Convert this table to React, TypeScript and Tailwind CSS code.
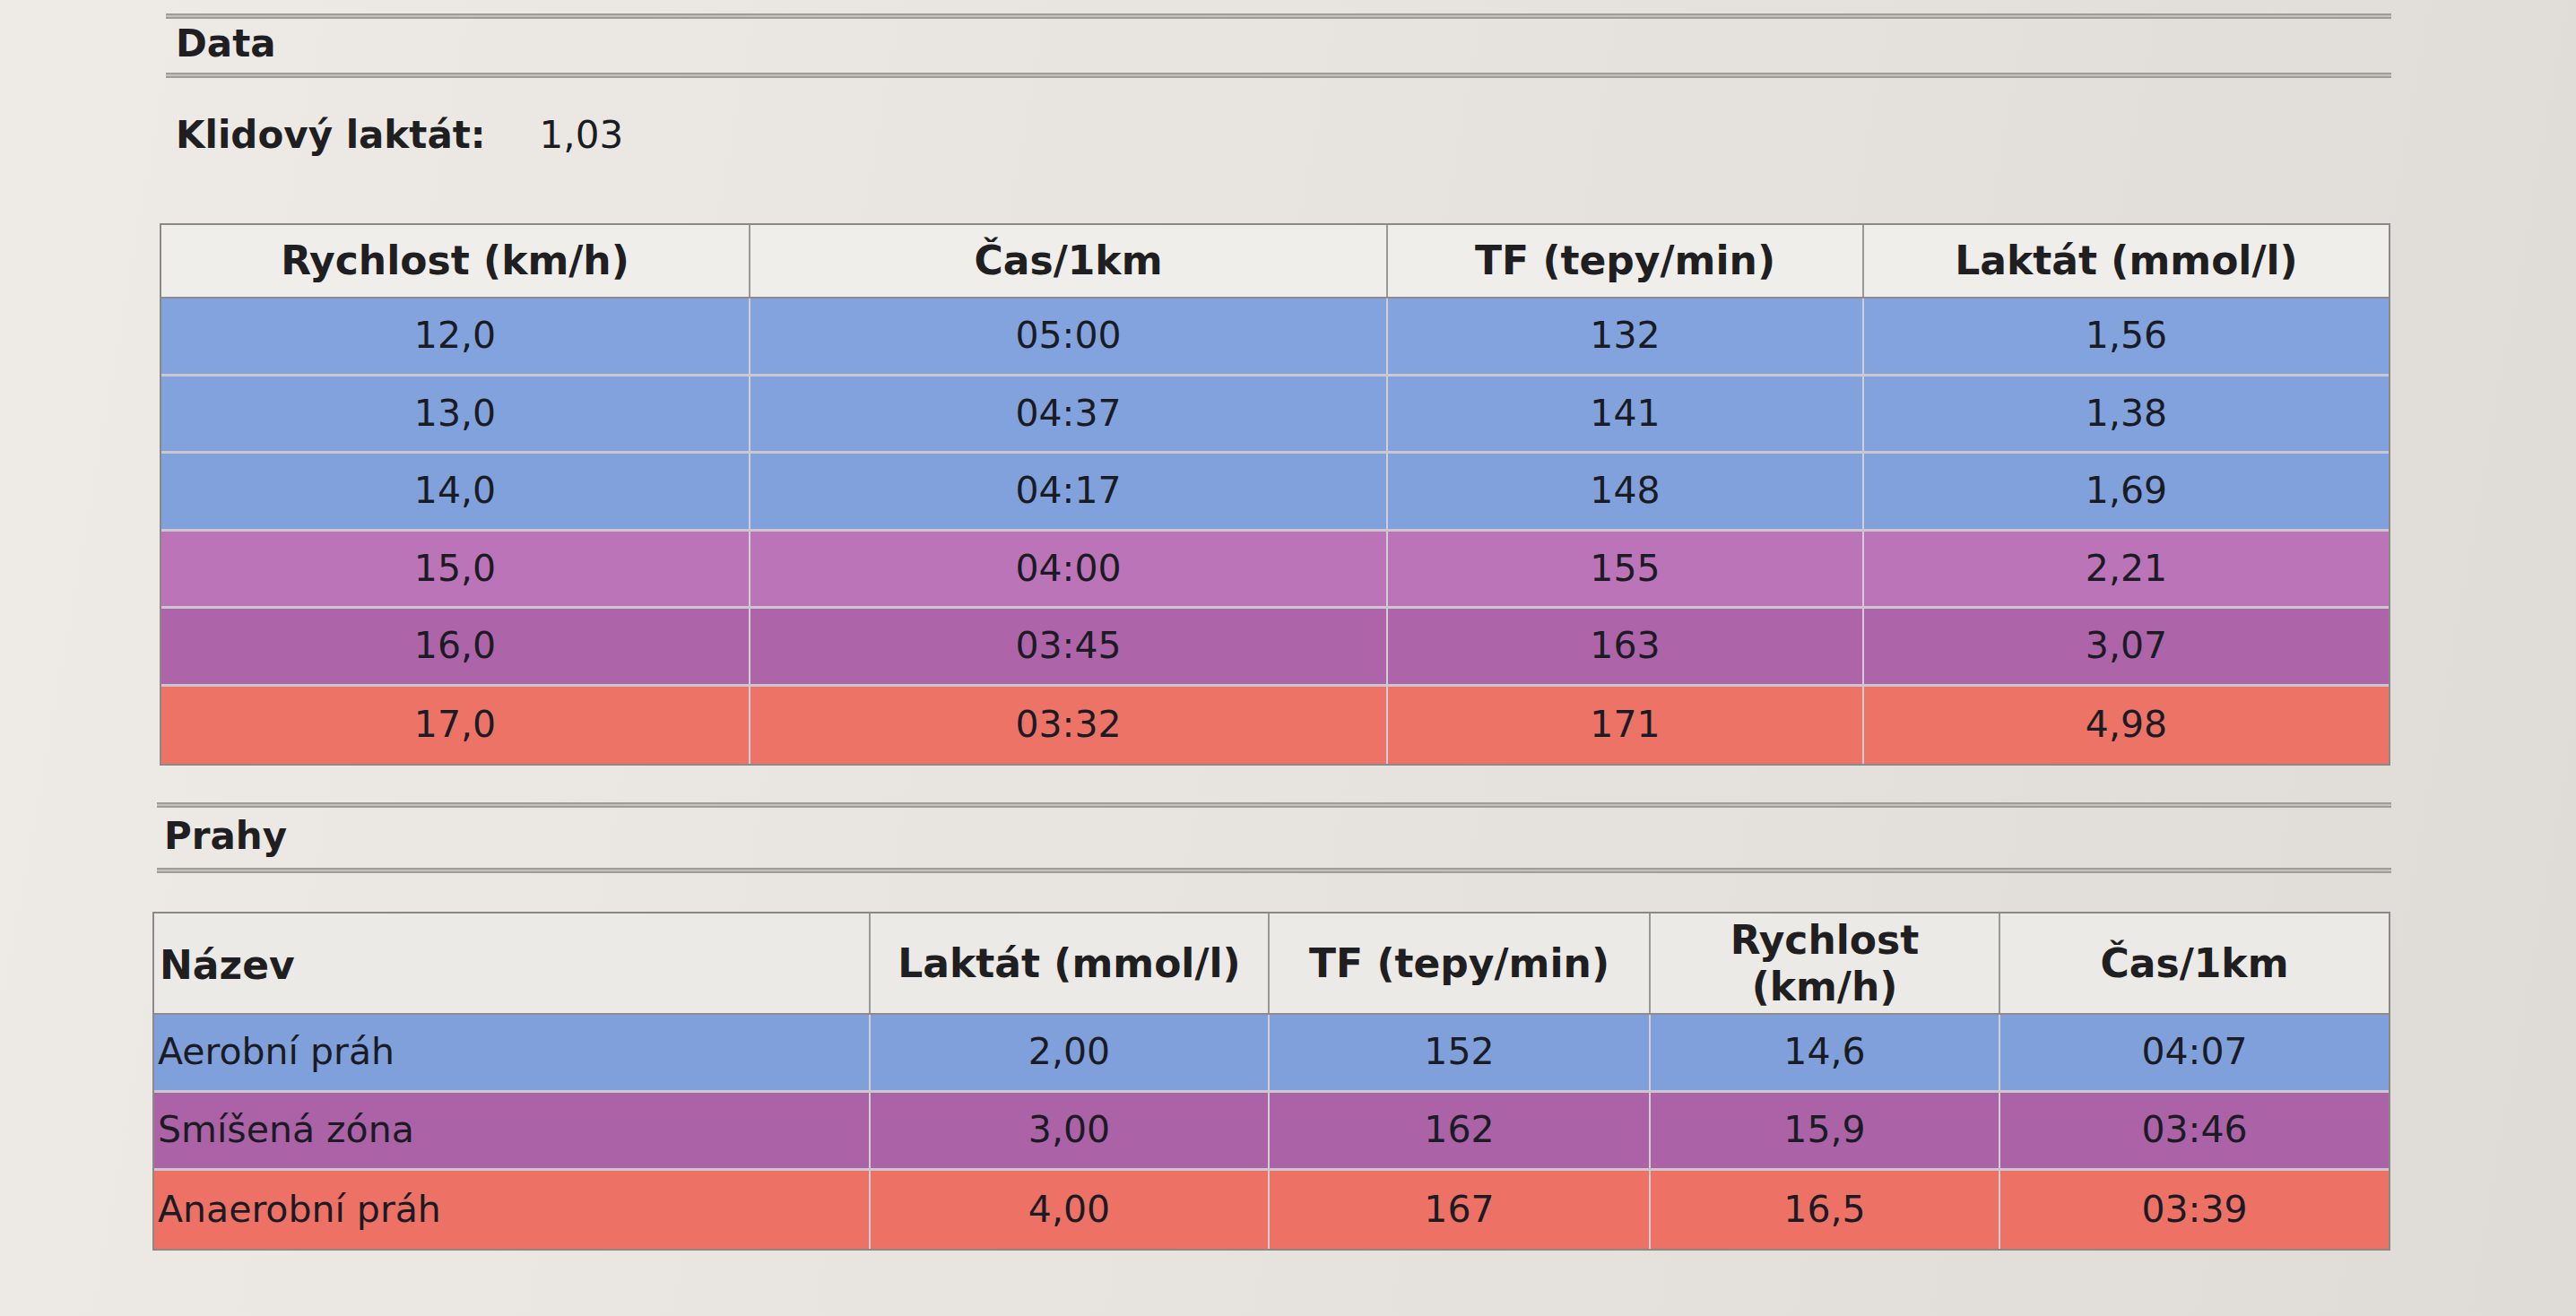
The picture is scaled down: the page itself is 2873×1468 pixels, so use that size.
import React from "react";

type Row = { bg: string; cells: string[] };

const dataRows: Row[] = [
  { bg: "bg-[#82a3dd]", cells: ["12,0", "05:00", "132", "1,56"] },
  { bg: "bg-[#81a2dd]", cells: ["13,0", "04:37", "141", "1,38"] },
  { bg: "bg-[#80a1dc]", cells: ["14,0", "04:17", "148", "1,69"] },
  { bg: "bg-[#bc74b8]", cells: ["15,0", "04:00", "155", "2,21"] },
  { bg: "bg-[#ae64a9]", cells: ["16,0", "03:45", "163", "3,07"] },
  { bg: "bg-[#ed7367]", cells: ["17,0", "03:32", "171", "4,98"] },
];

const prahyRows: Row[] = [
  { bg: "bg-[#80a0dc]", cells: ["Aerobní práh", "2,00", "152", "14,6", "04:07"] },
  { bg: "bg-[#ac62a6]", cells: ["Smíšená zóna", "3,00", "162", "15,9", "03:46"] },
  { bg: "bg-[#ee7166]", cells: ["Anaerobní práh", "4,00", "167", "16,5", "03:39"] },
];

function Rule({ wide }: { wide?: boolean }) {
  return (
    <div
      className={`h-[6px] ${wide ? "w-[2492px]" : "w-[2482px]"} border-t-2 border-b-2 border-[#9f9c99] bg-[#c4c1bd]`}
    />
  );
}

export default function App() {
  return (
    <div className="w-[2873px] h-[1468px] overflow-hidden bg-[linear-gradient(100deg,#eeebe7,#e6e3de_55%,#dfdcd7)] font-['DejaVu_Sans',sans-serif] text-[#1b1b24]">
      <div className="flex flex-col pl-[170px]">
        {/* Data */}
        <div className="ml-[15px] mt-[15px]">
          <Rule />
        </div>
        <div className="ml-[26px] h-[54px] flex items-center text-[42px] font-bold text-[#1f1f22]">Data</div>
        <div className="ml-[15px] mt-[6px]">
          <Rule />
        </div>
        <div className="ml-[26px] mt-[38px] h-[50px] flex items-center text-[42px]">
          <span className="font-bold text-[#1f1f22]">Klidový laktát:</span>
          <span className="ml-[60px]">1,03</span>
        </div>

        <div className="ml-[8px] mt-[74px] w-[2488px] border-2 border-[#8b8987]">
          <div className="grid grid-cols-[657px_711px_531px_585px] h-[82px] bg-[#f0eeeb] border-b-2 border-[#8e8c8a]">
            {["Rychlost (km/h)", "Čas/1km", "TF (tepy/min)", "Laktát (mmol/l)"].map((h, i) => (
              <div
                key={h}
                className={`flex items-center justify-center text-[44px] font-bold text-[#1f1f22] ${i < 3 ? "border-r-2 border-[#9a9896]" : ""}`}
              >
                {h}
              </div>
            ))}
          </div>
          {dataRows.map((r, ri) => (
            <div
              key={ri}
              className={`grid grid-cols-[657px_711px_531px_585px] h-[86.5px] ${r.bg} ${ri < dataRows.length - 1 ? "border-b-[3px] border-[#ccc7cf]" : ""}`}
            >
              {r.cells.map((c, ci) => (
                <div
                  key={ci}
                  className={`flex items-center justify-center text-[41px] ${ci < 3 ? "border-r-2 border-[#d3cdd6]" : ""}`}
                >
                  {c}
                </div>
              ))}
            </div>
          ))}
        </div>

        {/* Prahy */}
        <div className="ml-[5px] mt-[41px]">
          <Rule wide />
        </div>
        <div className="ml-[13px] mt-[6px] h-[50px] flex items-center text-[42px] font-bold text-[#1f1f22]">Prahy</div>
        <div className="ml-[5px] mt-[11px]">
          <Rule wide />
        </div>

        <div className="mt-[43px] w-[2496px] border-2 border-[#8b8987]">
          <div className="grid grid-cols-[799px_445px_425px_390px_433px] h-[113px] bg-[#eceae7] border-b-2 border-[#8e8c8a]">
            <div className="flex items-center pt-[4px] pl-[6px] text-[44px] font-bold text-[#1f1f22] border-r-2 border-[#9a9896]">Název</div>
            <div className="flex items-center justify-center text-[44px] font-bold text-[#1f1f22] border-r-2 border-[#9a9896]">Laktát (mmol/l)</div>
            <div className="flex items-center justify-center text-[44px] font-bold text-[#1f1f22] border-r-2 border-[#9a9896]">TF (tepy/min)</div>
            <div className="flex items-center justify-center text-center leading-[52px] text-[44px] font-bold text-[#1f1f22] border-r-2 border-[#9a9896]">
              Rychlost
              <br />
              (km/h)
            </div>
            <div className="flex items-center justify-center text-[44px] font-bold text-[#1f1f22]">Čas/1km</div>
          </div>
          {prahyRows.map((r, ri) => (
            <div
              key={ri}
              className={`grid grid-cols-[799px_445px_425px_390px_433px] h-[87px] ${r.bg} ${ri < prahyRows.length - 1 ? "border-b-[3px] border-[#ccc7cf]" : ""}`}
            >
              {r.cells.map((c, ci) => (
                <div
                  key={ci}
                  className={`flex items-center text-[41px] ${ci === 0 ? "pl-[4px]" : "justify-center"} ${ci < 4 ? "border-r-2 border-[#d3cdd6]" : ""}`}
                >
                  {c}
                </div>
              ))}
            </div>
          ))}
        </div>
      </div>
    </div>
  );
}
